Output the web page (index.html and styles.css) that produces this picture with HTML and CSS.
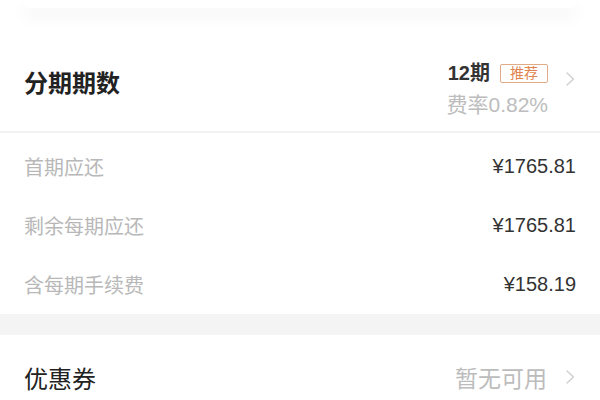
FILE: index.html
```html
<!DOCTYPE html>
<html lang="zh-CN">
<head>
<meta charset="utf-8">
<link rel="stylesheet" href="styles.css">
</head>
<body>
<div class="page">
  <div class="topcard"></div>

  <div class="period">
    <div class="period-title">分期期数</div>
    <div class="period-right">
      <div class="period-col">
        <div class="period-line">
          <span class="period-num">12期</span>
          <span class="badge">推荐</span>
        </div>
        <div class="rate">费率0.82%</div>
      </div>
      <svg class="chev chev-top" viewBox="0 0 9 14" width="9" height="14"><path d="M1 1 L7.5 7 L1 13" fill="none" stroke="#cfcfcf" stroke-width="1.4" stroke-linecap="round" stroke-linejoin="round"/></svg>
    </div>
  </div>

  <div class="divider"></div>

  <div class="details">
    <div class="drow"><span class="dlabel">首期应还</span><span class="dval">¥1765.81</span></div>
    <div class="drow"><span class="dlabel">剩余每期应还</span><span class="dval">¥1765.81</span></div>
    <div class="drow"><span class="dlabel">含每期手续费</span><span class="dval">¥158.19</span></div>
  </div>

  <div class="band"></div>

  <div class="coupon">
    <div class="coupon-title">优惠券</div>
    <div class="coupon-right">
      <span class="coupon-val">暂无可用</span>
      <svg class="chev" viewBox="0 0 9 14" width="9" height="14"><path d="M1 1 L7.5 7 L1 13" fill="none" stroke="#cfcfcf" stroke-width="1.4" stroke-linecap="round" stroke-linejoin="round"/></svg>
    </div>
  </div>
</div>
</body>
</html>
```

FILE: styles.css
```css
* { box-sizing: border-box; }
html, body { margin: 0; padding: 0; background: #ffffff; }
body {
  font-family: "Liberation Sans", "Noto Sans CJK SC", sans-serif;
  color: #222;
  width: 600px;
  height: 400px;
  overflow: hidden;
}
.page { display: flex; flex-direction: column; }

.topcard {
  height: 8px;
  margin: 0 22px;
  background: #fff;
  border-radius: 0 0 10px 10px;
  box-shadow: 0 8px 16px rgba(0, 0, 0, 0.06);
  position: relative;
  z-index: 1;
}

.period {
  display: flex;
  justify-content: space-between;
  align-items: center;
  padding: 53px 25px 14px 24px;
}
.period-title {
  font-size: 24px;
  font-weight: 600;
  color: #222;
  margin-bottom: 10px;
  line-height: 30px;
}
.period-right { display: flex; align-items: flex-start; gap: 18px; }
.period-col { display: flex; flex-direction: column; align-items: flex-end; gap: 8px; }
.period-line { display: flex; align-items: center; gap: 10px; height: 24px; }
.period-num { font-size: 20px; font-weight: 700; color: #333; line-height: 24px; }
.badge {
  font-size: 14px;
  color: #e0844f;
  border: 1px solid #e2ab88;
  border-radius: 2px;
  height: 19px;
  line-height: 17px;
  padding: 0 9px;
}
.rate { font-size: 21px; color: #bdbdbd; line-height: 24px; }
.chev { display: block; flex: none; }
.chev-top { margin-top: 11px; }

.divider { height: 2px; background: #f2f2f2; }

.details { padding: 4px 24px 0 24px; display: flex; flex-direction: column; }
.drow {
  height: 59px;
  display: flex;
  justify-content: space-between;
  align-items: center;
}
.dlabel { font-size: 20px; color: #b8b8b8; }
.dval { font-size: 20px; color: #333; }

.band { height: 21px; background: #f4f4f4; }

.coupon {
  height: 84px;
  display: flex;
  justify-content: space-between;
  align-items: center;
  padding: 0 25px 0 24px;
}
.coupon-title { font-size: 24px; color: #222; }
.coupon-right { display: flex; align-items: center; gap: 19px; }
.coupon-val { font-size: 23px; color: #bcbcbc; }
```
